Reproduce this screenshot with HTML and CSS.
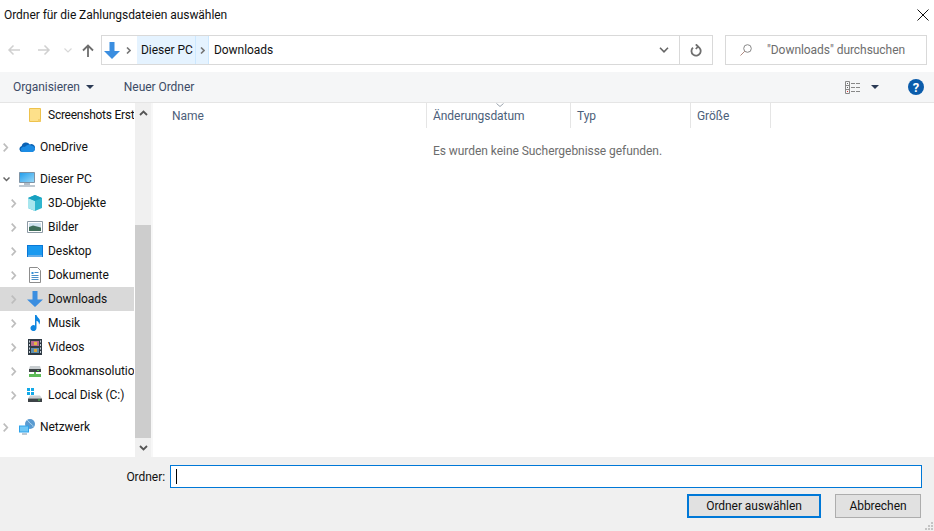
FILE: index.html
```html
<!DOCTYPE html>
<html lang="de">
<head>
    <meta charset="UTF-8">
    <meta name="viewport" content="width=device-width, initial-scale=1.0">
    <title>Ordner auswählen</title>
    <link rel="stylesheet" href="styles.css">
</head>
<body>
    <div class="dialog">
        <header class="title-bar">
            <span>Ordner für die Zahlungsdateien auswählen</span>
            <svg class="close-icon" width="12" height="12" viewBox="0 0 12 12"><path d="M.5.5l11 11M11.500.5l-11 11" stroke="#111" fill="none"/></svg>
        </header>

        <div class="nav-row">
            <div class="nav-buttons">
                <svg class="nav-back" width="14" height="12" viewBox="0 0 14 12"><path d="M13 6H2M6.500 1.500L2 6l4.500 4.500" stroke="#d0d0d0" stroke-width="1.500" fill="none"/></svg>
                <svg class="nav-forward" width="14" height="12" viewBox="0 0 14 12"><path d="M1 6h11M7.500 1.500L12 6l-4.500 4.500" stroke="#d0d0d0" stroke-width="1.500" fill="none"/></svg>
                <svg class="nav-recent" width="8" height="5" viewBox="0 0 8 5"><path d="M.5.5L4 4 7.500.5" stroke="#d8d8d8" stroke-width="1.200" fill="none"/></svg>
                <svg class="nav-up" width="12" height="13" viewBox="0 0 12 13"><path d="M6 13V2M1 6.500L6 1.500l5 5" stroke="#6d6d6d" stroke-width="1.800" fill="none"/></svg>
            </div>
            <div class="address-box">
                <svg class="crumb-icon" width="16" height="17" viewBox="0 0 16 17"><path d="M5.500 0h5v9H16l-8 8-8-8h5.500z" fill="#3b8ee0"/></svg>
                <svg class="crumb-sep" width="5" height="7" viewBox="0 0 5 7"><path d="M1 .5l3 3-3 3" stroke="#777" stroke-width="1.600" fill="none"/></svg>
                <span class="crumb-active">Dieser PC</span>
                <span class="crumb-arrow"><svg width="5" height="7" viewBox="0 0 5 7"><path d="M1 .5l3 3-3 3" stroke="#777" stroke-width="1.600" fill="none"/></svg></span>
                <span class="crumb-last">Downloads</span>
                <span class="address-drop"><svg width="10" height="6" viewBox="0 0 10 6"><path d="M1 .8l4 4 4-4" stroke="#666" stroke-width="1.600" fill="none"/></svg></span>
                <span class="address-refresh"><svg width="12" height="13" viewBox="0 0 12 13"><path d="M3 3.600a4.600 4.600 0 1 0 4.600-.9M5.800 .3l2.300 2.300L5.800 5" stroke="#6f6f6f" stroke-width="1.800" fill="none"/></svg></span>
            </div>
            <div class="search-box">
                <svg width="12" height="12" viewBox="0 0 12 12"><circle cx="7.500" cy="4.500" r="3.800" stroke="#888" fill="none"/><path d="M4.800 7.200L.5 11.500" stroke="#b08a80" fill="none"/></svg>
                <span>"Downloads" durchsuchen</span>
            </div>
        </div>

        <div class="toolbar">
            <span class="tool-item">Organisieren</span>
            <span class="tool-caret"></span>
            <span class="tool-item tool-new">Neuer Ordner</span>
            <div class="tool-right">
                <svg width="16" height="13" viewBox="0 0 16 13"><path d="M.5.500h4v12h-4zM.5 4.500h4M.5 8.500h4" stroke="#888" fill="none"/><path d="M6 2.500h4M11 2.500h4M6 6.500h4M11 6.500h4M6 10.500h4M11 10.500h4" stroke="#888" fill="none"/><path d="M2 2h1v1H2zM2 6h1v1H2z" fill="#666"/><path d="M2 10h1v1H2z" fill="#d33"/></svg>
                <span class="tool-caret view-caret"></span>
                <span class="help-icon">?</span>
            </div>
        </div>

        <main class="browser">
            <nav class="tree">
                <div class="tree-list">
                    <div class="tree-group">
                        <div class="tree-row sub">
                            <span class="expander"></span>
                            <svg class="tree-icon" width="16" height="16" viewBox="0 0 16 16"><path d="M2.500 1.500h11v13h-11z" fill="#fde08a" stroke="#eec24c"/><path d="M11 12h2.500v2.500H11z" fill="#f4cf6c"/></svg>
                            <span class="tree-label tight">Screenshots Erst</span>
                        </div>
                    </div>
                    <div class="tree-group">
                        <div class="tree-row">
                            <svg class="expander" width="7" height="9" viewBox="0 0 7 9"><path d="M.7.700L4.300 4.500.7 8.300" stroke="#bdbdbd" stroke-width="1.700" fill="none"/></svg>
                            <svg class="tree-icon" width="16" height="16" viewBox="0 0 16 16"><path d="M3.500 13a3 3 0 0 1-.8-5.900 4.300 4.300 0 0 1 8-1.500A3.500 3.500 0 0 1 16 9v.5a3.500 3.500 0 0 1-3 3.500z" fill="#0a62b4"/><path d="M2 9.500c1-1.500 2.500-2 4-1.500 1-1.800 4-3 6-1.500 1.500 0 3 1 4 2.500v.5a3.500 3.500 0 0 1-3 3.500H3.500A3 3 0 0 1 2 9.500z" fill="#1c8ce4"/></svg>
                            <span class="tree-label">OneDrive</span>
                        </div>
                    </div>
                    <div class="tree-group">
                        <div class="tree-row">
                            <svg class="expander" width="7" height="5" viewBox="0 0 7 5"><path d="M.5.500l3 3 3-3" stroke="#666" stroke-width="1.500" fill="none"/></svg>
                            <svg class="tree-icon" width="16" height="16" viewBox="0 0 16 16"><defs><linearGradient id="screen" x1="0" y1="0" x2="1" y2="1"><stop offset="0" stop-color="#1f9cec"/><stop offset="1" stop-color="#9bdaf8"/></linearGradient></defs><path d="M.5 1.500h15v10H.5z" fill="url(#screen)" stroke="#7f93a5"/><path d="M5 12h6v2H5z" fill="#b4bfc9"/><path d="M0 14.500h16v1H0z" fill="#7f93a5"/></svg>
                            <span class="tree-label">Dieser PC</span>
                        </div>
                        <div class="tree-row sub">
                            <svg class="expander" width="7" height="9" viewBox="0 0 7 9"><path d="M.7.700L4.300 4.500.7 8.300" stroke="#bdbdbd" stroke-width="1.700" fill="none"/></svg>
                            <svg class="tree-icon" width="16" height="16" viewBox="0 0 16 16"><path d="M8 0l7 3v10l-7 3-7-3V3z" fill="#2fb6cf"/><path d="M8 6v10l-7-3V3z" fill="#a7e6ee"/><path d="M8 0l7 3-7 3-7-3z" fill="#17a0c0"/></svg>
                            <span class="tree-label">3D-Objekte</span>
                        </div>
                        <div class="tree-row sub">
                            <svg class="expander" width="7" height="9" viewBox="0 0 7 9"><path d="M.7.700L4.300 4.500.7 8.300" stroke="#bdbdbd" stroke-width="1.700" fill="none"/></svg>
                            <svg class="tree-icon" width="16" height="16" viewBox="0 0 16 16"><path d="M.5 2.500h15v11H.5z" fill="#fff" stroke="#8d9aa5"/><path d="M2 4h12v4H2z" fill="#cfe2ee"/><path d="M2 8l4-1.500L14 8.500V12H2z" fill="#3f6e5a"/></svg>
                            <span class="tree-label">Bilder</span>
                        </div>
                        <div class="tree-row sub">
                            <svg class="expander" width="7" height="9" viewBox="0 0 7 9"><path d="M.7.700L4.300 4.500.7 8.300" stroke="#bdbdbd" stroke-width="1.700" fill="none"/></svg>
                            <svg class="tree-icon" width="16" height="16" viewBox="0 0 16 16"><path d="M0 2h16v12H0z" fill="#0a78d7"/><path d="M1 3h14v9H1z" fill="#1a9af0"/><path d="M1 12.500h14v1H1z" fill="#bfe0f7"/></svg>
                            <span class="tree-label">Desktop</span>
                        </div>
                        <div class="tree-row sub">
                            <svg class="expander" width="7" height="9" viewBox="0 0 7 9"><path d="M.7.700L4.300 4.500.7 8.300" stroke="#bdbdbd" stroke-width="1.700" fill="none"/></svg>
                            <svg class="tree-icon" width="16" height="16" viewBox="0 0 16 16"><path d="M2.500.500h8l3 3v12h-11z" fill="#fff" stroke="#8d8d8d"/><path d="M4.500 5h2v2h-2z" fill="#2e8fd8"/><path d="M7.500 5.500h4M4.500 8.500h7M4.500 10.500h7M4.500 12.500h7" stroke="#4a90c8" fill="none"/></svg>
                            <span class="tree-label">Dokumente</span>
                        </div>
                        <div class="tree-row sub selected">
                            <svg class="expander" width="7" height="9" viewBox="0 0 7 9"><path d="M.7.700L4.300 4.500.7 8.300" stroke="#bdbdbd" stroke-width="1.700" fill="none"/></svg>
                            <svg class="tree-icon" width="16" height="16" viewBox="0 0 16 16"><path d="M5.500 0h5v8.500H16L8 16 0 8.500h5.500z" fill="#3b8ee0"/></svg>
                            <span class="tree-label">Downloads</span>
                        </div>
                        <div class="tree-row sub">
                            <svg class="expander" width="7" height="9" viewBox="0 0 7 9"><path d="M.7.700L4.300 4.500.7 8.300" stroke="#bdbdbd" stroke-width="1.700" fill="none"/></svg>
                            <svg class="tree-icon" width="16" height="16" viewBox="0 0 16 16"><path d="M8 0h1.500c.5 2.500 3.500 3 3.500 6.500 0 1.500-.5 2.500-1 3 0-2-1-3.200-2.500-3.700V13a3 3 0 1 1-1.500-2.500z" fill="#0f86e0"/></svg>
                            <span class="tree-label">Musik</span>
                        </div>
                        <div class="tree-row sub">
                            <svg class="expander" width="7" height="9" viewBox="0 0 7 9"><path d="M.7.700L4.300 4.500.7 8.300" stroke="#bdbdbd" stroke-width="1.700" fill="none"/></svg>
                            <svg class="tree-icon" width="16" height="16" viewBox="0 0 16 16"><path d="M1 0h14v16H1z" fill="#2f3a44"/><path d="M2 1.500h1v2H2zM2 5h1v2H2zM2 8.500h1v2H2zM2 12h1v2H2zM13 1.500h1v2h-1zM13 5h1v2h-1zM13 8.500h1v2h-1zM13 12h1v2h-1z" fill="#c5ced6"/><path d="M4 2h8v5H4z" fill="#b96a8e"/><path d="M4 9h8v5H4z" fill="#5c8fb0"/><path d="M7 3h3v3H7z" fill="#e0b83c"/><path d="M7 10h3v3H7z" fill="#d9a53a"/></svg>
                            <span class="tree-label">Videos</span>
                        </div>
                        <div class="tree-row sub">
                            <svg class="expander" width="7" height="9" viewBox="0 0 7 9"><path d="M.7.700L4.300 4.500.7 8.300" stroke="#bdbdbd" stroke-width="1.700" fill="none"/></svg>
                            <svg class="tree-icon" width="16" height="16" viewBox="0 0 16 16"><path d="M3 3h10l1 3H2z" fill="#c9ced1"/><path d="M2 6h12v3H2z" fill="#3d4347"/><path d="M10 7h2v1h-2z" fill="#52d04e"/><path d="M7 9h2v2h5v3H2v-3h5z" fill="#5dbb57"/></svg>
                            <span class="tree-label">Bookmansolutio</span>
                        </div>
                        <div class="tree-row sub">
                            <svg class="expander" width="7" height="9" viewBox="0 0 7 9"><path d="M.7.700L4.300 4.500.7 8.300" stroke="#bdbdbd" stroke-width="1.700" fill="none"/></svg>
                            <svg class="tree-icon" width="16" height="16" viewBox="0 0 16 16"><path d="M0 1h3v3H0zM4 1h3v3H4zM0 5h3v3H0zM4 5h3v3H4z" fill="#12a9e8"/><path d="M3 8.500h10l2 3H1z" fill="#c9ced1"/><path d="M1 11.500h14V15H1z" fill="#3d4347"/><path d="M11 12.500h2v1h-2z" fill="#52d04e"/></svg>
                            <span class="tree-label">Local Disk (C:)</span>
                        </div>
                    </div>
                    <div class="tree-group">
                        <div class="tree-row">
                            <svg class="expander" width="7" height="9" viewBox="0 0 7 9"><path d="M.7.700L4.300 4.500.7 8.300" stroke="#bdbdbd" stroke-width="1.700" fill="none"/></svg>
                            <svg class="tree-icon" width="16" height="16" viewBox="0 0 16 16"><circle cx="11" cy="5" r="5" fill="#5a9ad0"/><path d="M8 1c2 1 2 3 4 4s2 2 2 3" stroke="#a9d3ee" fill="none"/><path d="M0 6.500h10v7H0z" fill="#2ea2ea"/><path d="M1 7.500h8v5H1z" fill="#6ec6f5"/><path d="M3 14.500h5v1H3z" fill="#7f93a5"/></svg>
                            <span class="tree-label">Netzwerk</span>
                        </div>
                    </div>
                </div>
                <div class="tree-scroll">
                    <span class="scroll-btn"><svg width="9" height="6" viewBox="0 0 9 6"><path d="M1 5l3.500-3.500L8 5" stroke="#555" stroke-width="1.800" fill="none"/></svg></span>
                    <span class="scroll-gap"></span>
                    <span class="scroll-thumb"></span>
                    <span class="scroll-btn"><svg width="9" height="6" viewBox="0 0 9 6"><path d="M1 1l3.500 3.500L8 1" stroke="#555" stroke-width="1.800" fill="none"/></svg></span>
                </div>
            </nav>

            <section class="files">
                <div class="file-head">
                    <span class="col col-name">Name</span>
                    <span class="col col-date">Änderungsdatum<svg class="sort-mark" width="8" height="4" viewBox="0 0 8 4"><path d="M.5.500l3.500 3 3.500-3" stroke="#9aa3ad" fill="none"/></svg></span>
                    <span class="col col-type">Typ</span>
                    <span class="col col-size">Größe</span>
                </div>
                <p class="no-results">Es wurden keine Suchergebnisse gefunden.</p>
            </section>
        </main>

        <footer class="bottom">
            <div class="folder-row">
                <span class="folder-label">Ordner:</span>
                <div class="folder-input"><span class="caret-line"></span></div>
            </div>
            <div class="button-row">
                <button class="primary">Ordner auswählen</button>
                <button class="cancel">Abbrechen</button>
            </div>
            <svg class="grip" width="8" height="8" viewBox="0 0 8 8"><path d="M6 0h2v2H6zM3 3h2v2H3zM6 3h2v2H6zM0 6h2v2H0zM3 6h2v2H3zM6 6h2v2H6z" fill="#c4c4c4"/></svg>
        </footer>
    </div>
</body>
</html>
```

FILE: styles.css
```css
html, body {
    margin: 0;
    padding: 0;
}

body {
    font-family: Roboto, "Noto Sans", sans-serif;
    font-size: 12px;
    letter-spacing: -0.05px;
    color: #111;
    background-color: white;
    overflow: hidden;
}

.dialog {
    display: flex;
    flex-direction: column;
    position: relative;
    width: 934px;
    height: 531px;
}

svg {
    display: block;
    flex: none;
}

.title-bar {
    display: flex;
    align-items: center;
    justify-content: space-between;
    height: 30px;
    padding: 0 5px 0 4px;
    flex: none;
}

.nav-row {
    display: flex;
    height: 37px;
    padding-top: 5px;
    flex: none;
}

.nav-buttons {
    display: flex;
    align-items: center;
    width: 94px;
    height: 30px;
    padding-left: 7px;
    box-sizing: border-box;
    flex: none;
}

.nav-forward {
    margin-left: 16px;
}

.nav-recent {
    margin-left: 13px;
}

.nav-up {
    margin-left: 10px;
}

.address-box {
    display: flex;
    align-items: center;
    width: 612px;
    height: 30px;
    margin-left: 7px;
    border: 1px solid #d9d9d9;
    box-sizing: border-box;
    flex: none;
}

.crumb-icon {
    margin-left: 2px;
}

.crumb-sep {
    margin-left: 6px;
    margin-right: 6px;
}

.crumb-active {
    display: flex;
    align-items: center;
    height: 28px;
    padding-left: 4px;
    width: 58px;
    box-sizing: border-box;
    white-space: nowrap;
    background-color: #e5f3ff;
}

.crumb-arrow {
    display: flex;
    align-items: center;
    justify-content: center;
    width: 14px;
    height: 28px;
    box-sizing: border-box;
    background-color: #e5f3ff;
    border-left: 1px solid #cce8ff;
    border-right: 1px solid #cce8ff;
}

.crumb-last {
    margin-left: 5px;
}

.address-drop {
    display: flex;
    align-items: center;
    margin-left: auto;
    padding-right: 10px;
}

.address-refresh {
    display: flex;
    align-items: center;
    justify-content: center;
    width: 33px;
    height: 28px;
    border-left: 1px solid #d9d9d9;
    box-sizing: border-box;
}

.search-box {
    display: flex;
    align-items: center;
    width: 202px;
    height: 30px;
    margin-left: 12px;
    padding-left: 14px;
    border: 1px solid #d9d9d9;
    box-sizing: border-box;
    color: #6d6d6d;
    flex: none;
}

.search-box span {
    margin-left: 15px;
}

.toolbar {
    display: flex;
    align-items: center;
    height: 31px;
    padding-left: 13px;
    box-sizing: border-box;
    background-color: #f5f6f7;
    border-bottom: 1px solid #e5e5e5;
    color: #3c4b66;
    flex: none;
}

.tool-caret {
    width: 0;
    height: 0;
    margin-left: 6px;
    border-left: 4px solid transparent;
    border-right: 4px solid transparent;
    border-top: 4px solid #2b3a55;
}

.tool-new {
    margin-left: 30px;
}

.tool-right {
    display: flex;
    align-items: center;
    margin-left: auto;
    padding-right: 10px;
}

.view-caret {
    margin-left: 10px;
}

.help-icon {
    display: flex;
    align-items: center;
    justify-content: center;
    width: 16px;
    height: 16px;
    margin-left: 29px;
    border-radius: 50%;
    background-color: #0b5cab;
    color: white;
    font-size: 13px;
    font-weight: bold;
}

.browser {
    display: flex;
    flex: 1;
    min-height: 0;
}

.tree {
    display: flex;
    width: 153px;
    flex: none;
    border-right: 2px solid #f7f7f7;
    box-sizing: border-box;
}

.tree-list {
    display: flex;
    flex-direction: column;
    gap: 8px;
    width: 135px;
    flex: none;
    overflow: hidden;
}

.tree-row {
    display: flex;
    align-items: center;
    height: 24px;
    width: 134px;
    padding-left: 3px;
    box-sizing: border-box;
    white-space: nowrap;
    overflow: hidden;
}

.tree-row.sub {
    padding-left: 11px;
}

.tree-row.selected {
    background-color: #d9d9d9;
}

.tree-label.tight {
    letter-spacing: -0.25px;
}

.expander {
    width: 7px;
    flex: none;
}

.tree-icon {
    margin-left: 9px;
    margin-right: 5px;
}

.tree-scroll {
    display: flex;
    flex-direction: column;
    width: 16px;
    flex: none;
    background-color: #f0f0f0;
}

.scroll-btn {
    display: flex;
    align-items: center;
    justify-content: center;
    height: 19px;
    flex: none;
}

.scroll-gap {
    height: 103px;
    flex: none;
}

.scroll-thumb {
    flex: 1;
    background-color: #cdcdcd;
}

.files {
    flex: 1;
    min-width: 0;
}

.file-head {
    display: flex;
    height: 25px;
    color: #4c607a;
}

.col {
    display: flex;
    align-items: center;
    position: relative;
    padding-left: 6px;
    box-sizing: border-box;
    border-right: 1px solid #e5e5e5;
    flex: none;
}

.col-name {
    width: 274px;
    padding-left: 19px;
}

.col-date {
    width: 144px;
}

.col-type {
    width: 120px;
}

.col-size {
    width: 80px;
}

.sort-mark {
    position: absolute;
    top: 0;
    left: 69px;
}

.no-results {
    margin: 16px 0 0 280px;
    color: #6d6d6d;
}

.bottom {
    position: relative;
    display: flex;
    flex-direction: column;
    height: 74px;
    padding-top: 8px;
    box-sizing: border-box;
    background-color: #f0f0f0;
    flex: none;
}

.folder-row {
    display: flex;
    align-items: center;
    justify-content: flex-end;
    padding-right: 12px;
}

.folder-input {
    display: flex;
    align-items: center;
    width: 752px;
    height: 23px;
    margin-left: 5px;
    padding-left: 5px;
    box-sizing: border-box;
    background-color: white;
    border: 1px solid #0078d7;
}

.caret-line {
    width: 1px;
    height: 15px;
    background-color: black;
}

.button-row {
    display: flex;
    justify-content: flex-end;
    gap: 14px;
    margin-top: 6px;
    padding-right: 13px;
}

button {
    height: 24px;
    padding: 0;
    font-family: inherit;
    font-size: 12px;
    letter-spacing: inherit;
    color: #111;
    background-color: #e1e1e1;
    cursor: pointer;
}

.primary {
    width: 134px;
    border: 2px solid #0078d7;
}

.cancel {
    width: 86px;
    border: 1px solid #adadad;
}

.grip {
    position: absolute;
    right: 1px;
    bottom: 1px;
}
```
